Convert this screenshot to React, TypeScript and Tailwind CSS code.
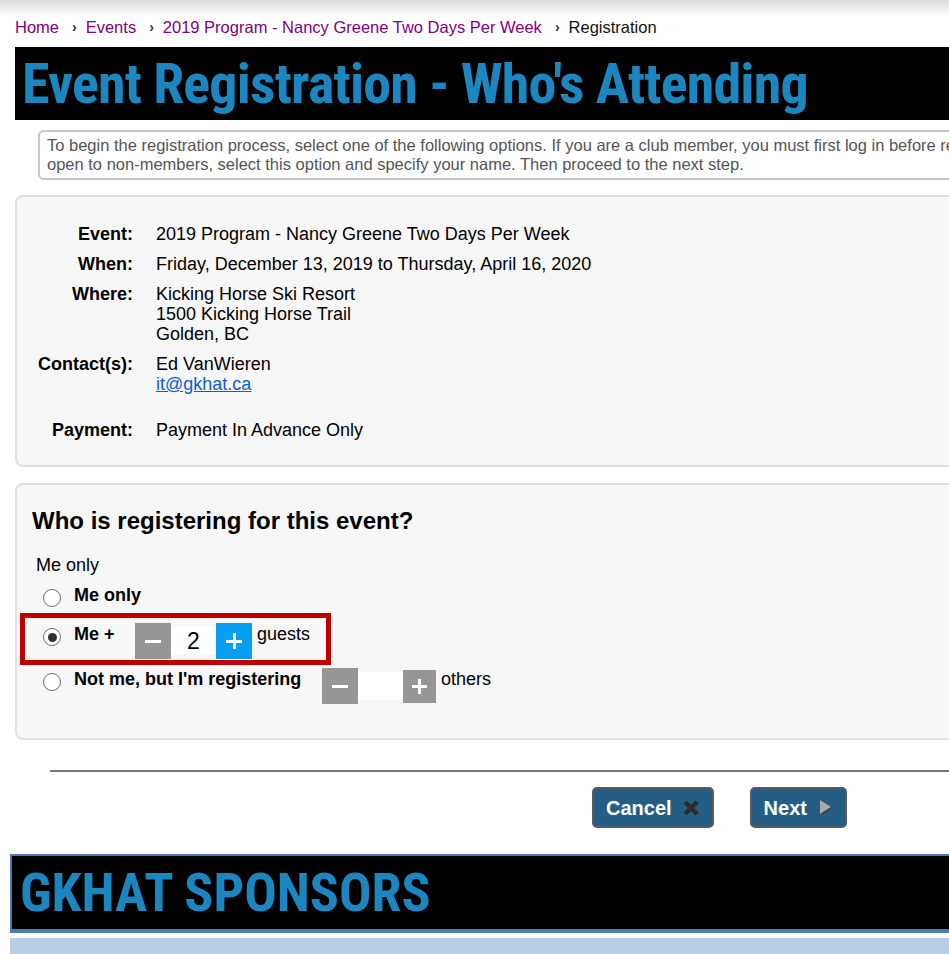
import { Fragment } from "react";

const Chevron = () => (
  <span className="ml-[13px] mr-[9px] text-[14px] font-bold text-[#333]">›</span>
);

const Radio = ({ checked }: { checked?: boolean }) => (
  <span className="flex h-[18px] w-[18px] shrink-0 items-center justify-center rounded-full border-[1.5px] border-[#6d6d6d] bg-white">
    {checked && <span className="h-[9px] w-[9px] rounded-full bg-[#333]" />}
  </span>
);

const Stepper = ({ value, plusBlue }: { value?: string; plusBlue?: boolean }) => (
  <div className="flex items-center">
    <span className="flex h-[36px] w-[36px] items-center justify-center bg-[#969696]">
      <span className="h-[3px] w-[16px] bg-white" />
    </span>
    <span className="flex h-[28px] w-[45px] items-center justify-center bg-white text-[23px] text-black">
      {value}
    </span>
    {plusBlue ? (
      <span className="relative flex h-[36px] w-[36px] items-center justify-center bg-[#079ff1]">
        <span className="absolute h-[3px] w-[16px] bg-white" />
        <span className="absolute h-[16px] w-[3px] bg-white" />
      </span>
    ) : (
      <span className="relative flex h-[33px] w-[33px] items-center justify-center bg-[#969696]">
        <span className="absolute h-[3px] w-[15px] bg-white" />
        <span className="absolute h-[15px] w-[3px] bg-white" />
      </span>
    )}
  </div>
);

export default function App() {
  const details = [
    { label: "Event:", lines: ["2019 Program - Nancy Greene Two Days Per Week"] },
    { label: "When:", lines: ["Friday, December 13, 2019 to Thursday, April 16, 2020"] },
    { label: "Where:", lines: ["Kicking Horse Ski Resort", "1500 Kicking Horse Trail", "Golden, BC"] },
  ];

  return (
    <div className="min-h-[954px] w-full overflow-hidden bg-white font-['Liberation_Sans',Arial,sans-serif] text-black">
      <div className="w-[1200px]">
        {/* top shade */}
        <div className="h-[16px] bg-gradient-to-b from-[#dcdcdc] to-white" />

        {/* Breadcrumb */}
        <nav className="ml-[15px] mt-[2px] flex items-center text-[16.5px] leading-[18px] text-[#800080]">
          <span>Home</span>
          <Chevron />
          <span>Events</span>
          <Chevron />
          <span>2019 Program - Nancy Greene Two Days Per Week</span>
          <Chevron />
          <span className="text-[#111]">Registration</span>
        </nav>

        {/* Title */}
        <div className="ml-[15px] mt-[11px] flex h-[73px] items-center bg-black pl-[7px]">
          <h1 className="font-['Roboto_Condensed','DejaVu_Sans_Condensed','Liberation_Sans_Narrow',sans-serif] text-[56px] font-bold leading-none tracking-[-0.8px] text-[#1b86bf]">
            Event Registration - Who's Attending
          </h1>
        </div>

        {/* Intro note */}
        <div className="ml-[38px] mt-[10px] rounded-[6px] border-2 border-[#c6c6c6] px-[7px] py-[4px] text-[16.5px] leading-[19px] text-[#555]">
          <p className="whitespace-nowrap">
            To begin the registration process, select one of the following options. If you are a club member, you must first log in before registering. If this event is
          </p>
          <p className="whitespace-nowrap">
            open to non-members, select this option and specify your name. Then proceed to the next step.
          </p>
        </div>

        {/* Event details */}
        <div className="ml-[15px] mt-[15px] rounded-[8px] border-2 border-[#e1e1e1] bg-[#f7f7f7] pb-[25px] pt-[27px] text-[18px] leading-[20px]">
          <div className="grid grid-cols-[116px_1fr] gap-x-[23px] gap-y-[10px]">
            {details.map((d) => (
              <Fragment key={d.label}>
                <div className="text-right font-bold">{d.label}</div>
                <div>
                  {d.lines.map((l) => (
                    <div key={l}>{l}</div>
                  ))}
                </div>
              </Fragment>
            ))}
            <div className="text-right font-bold">Contact(s):</div>
            <div>
              <div>Ed VanWieren</div>
              <div className="underline text-[#0b5ed7] decoration-[#0b5ed7]">it@gkhat.ca</div>
            </div>
            <div className="mt-[16px] text-right font-bold">Payment:</div>
            <div className="mt-[16px]">Payment In Advance Only</div>
          </div>
        </div>

        {/* Who is registering */}
        <div className="ml-[15px] mt-[16px] rounded-[8px] border-2 border-[#e1e1e1] bg-[#f7f7f7] pb-[34px] pl-[15px] pt-[22px]">
          <h2 className="text-[24px] font-bold leading-[28px]">Who is registering for this event?</h2>
          <div className="ml-[4px] mt-[19px] text-[18px] leading-[22px]">Me only</div>

          <div className="ml-[11px] mt-[8px] flex items-start text-[18px] font-bold leading-[22px]">
            <span className="mt-[5px]">
              <Radio />
            </span>
            <span className="ml-[13px]">Me only</span>
          </div>

          <div className="relative ml-[11px] mt-[16px] flex items-start text-[18px] leading-[22px]">
            <span className="pointer-events-none absolute -left-[23px] -top-[10px] h-[52px] w-[311px] border-[5px] border-[#c00000]" />
            <span className="mt-[5px]">
              <Radio checked />
            </span>
            <span className="ml-[13px] w-[61px] font-bold">Me +</span>
            <Stepper value="2" plusBlue />
            <span className="ml-[5px]">guests</span>
          </div>

          <div className="ml-[11px] mt-[9px] flex items-start text-[18px] leading-[22px]">
            <span className="mt-[5px]">
              <Radio />
            </span>
            <span className="ml-[13px] w-[248px] font-bold">Not me, but I'm registering</span>
            <Stepper />
            <span className="ml-[5px]">others</span>
          </div>
        </div>

        {/* Divider */}
        <div className="ml-[50px] mt-[30px] h-[2px] bg-[#777]" />

        {/* Actions */}
        <div className="ml-[592px] mt-[15px] flex gap-[36px]">
          <button className="flex h-[41px] items-center gap-[10px] rounded-[5px] border-2 border-[#5a5a5a] bg-[#245e84] px-[12px] text-[20px] font-bold text-white">
            Cancel
            <svg width="18" height="18" viewBox="0 0 18 18">
              <path d="M3 3 L15 15 M15 3 L3 15" stroke="#2b2b2b" strokeWidth="4.5" strokeLinecap="butt" />
            </svg>
          </button>
          <button className="flex h-[41px] items-center gap-[12px] rounded-[5px] border-2 border-[#5a5a5a] bg-[#245e84] px-[12px] text-[20px] font-bold text-white">
            Next
            <svg width="14" height="18" viewBox="0 0 14 18">
              <path d="M2 2 L13 9 L2 16 Z" fill="#3a3a3a" />
              <path d="M1 1 L12 8 L1 15 Z" fill="#a9a9a9" />
            </svg>
          </button>
        </div>

        {/* Sponsors */}
        <div className="ml-[10px] mt-[26px] flex h-[79px] items-center border-b-4 border-l-2 border-t-2 border-[#4a7cb8] bg-black pl-[8px]">
          <h2 className="font-['Roboto_Condensed','DejaVu_Sans_Condensed','Liberation_Sans_Narrow',sans-serif] text-[54px] font-bold leading-none text-[#1b86bf]">
            GKHAT SPONSORS
          </h2>
        </div>
        <div className="ml-[10px] mt-[5px] h-[20px] bg-[#b8cce4]" />
      </div>
    </div>
  );
}
